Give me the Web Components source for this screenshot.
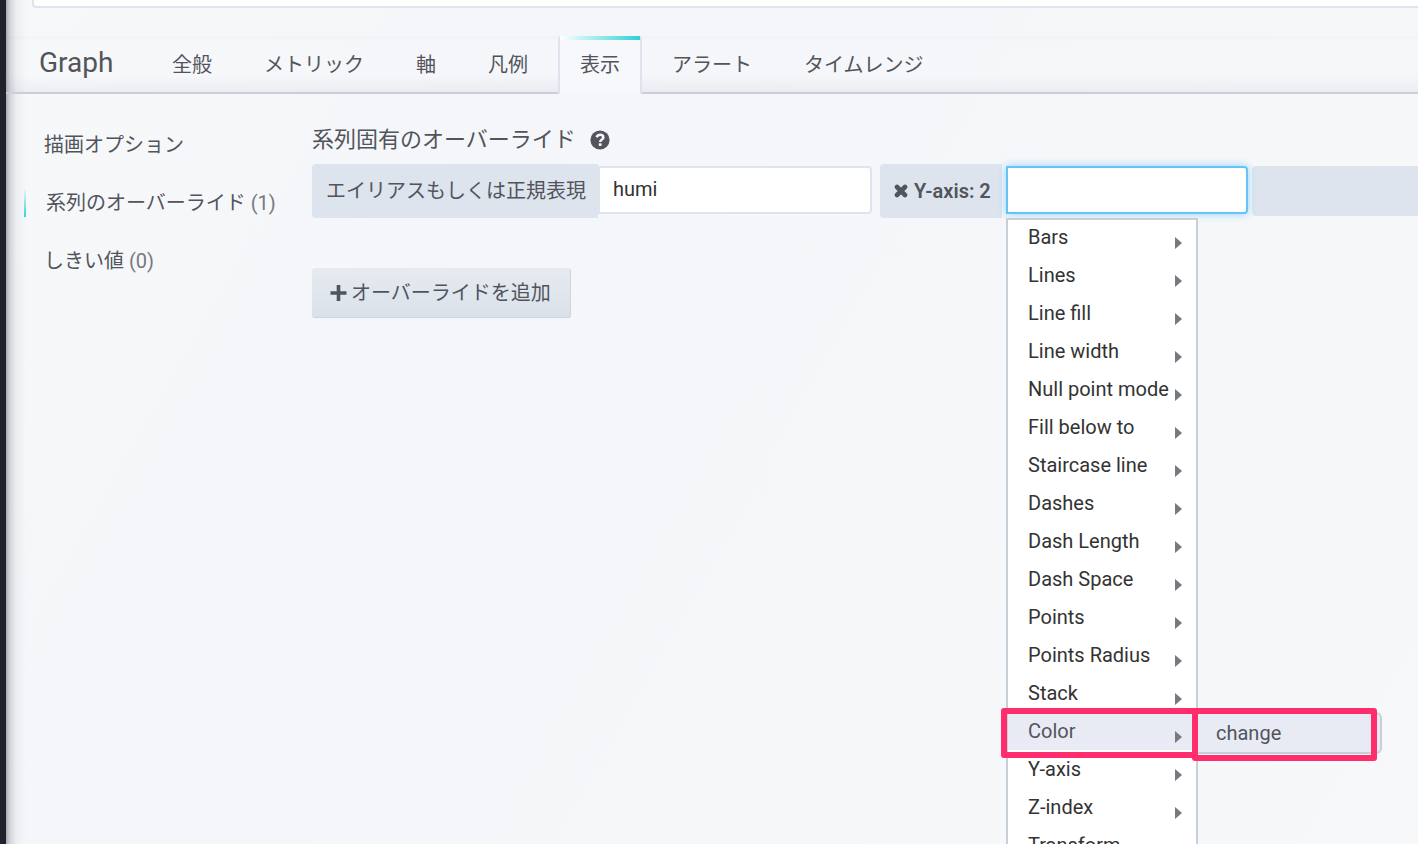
<!DOCTYPE html>
<html lang="ja">
<head>
<meta charset="utf-8">
<title>Graph</title>
<style>
  html, body { margin: 0; height: 100%; }
  body {
    font: 20px/28px Roboto, "Noto Sans CJK JP", sans-serif;
    color: #52545c;
    overflow: hidden;
    background: #f5f6f9;
  }
</style>
</head>
<body>
<graph-app></graph-app>

<script>
const define = (name, html, init) => {
  const tpl = document.createElement('template');
  tpl.innerHTML = html;
  customElements.define(name, class extends HTMLElement {
    connectedCallback() {
      if (this.shadowRoot) return;
      this.attachShadow({ mode: 'open' }).appendChild(tpl.content.cloneNode(true));
      if (init) init(this, this.shadowRoot);
    }
  });
};

/* One tab of the editor header */
define('graph-tab', `
  <style>
    :host { display: block; }
    a {
      display: block; box-sizing: border-box; height: 58px; padding: 15px 20px 0;
      border: 2px solid transparent; border-width: 0 2px;
      color: inherit; text-decoration: none; white-space: nowrap; position: relative;
    }
    :host([active]) a {
      background: #f7f8fb; border-color: #dde4ed; border-radius: 3px 3px 0 0;
    }
    :host([active]) a::before {
      content: ""; position: absolute; left: 0; right: 0; top: 0; height: 4px;
      background: linear-gradient(to right, #fff, #2ed1d6);
    }
  </style>
  <a href="#"><slot></slot></a>`);

/* Header: panel type and its tabs */
define('graph-tabs', `
  <style>
    :host {
      display: flex; height: 56px; padding-left: 33px;
      border-bottom: 2px solid #c7d0d9;
      background: linear-gradient(to bottom, #52648008, transparent 10%, transparent 70%, #52548010);
    }
    h1 { margin: 0; width: 111px; font-weight: 400; font-size: 28px; line-height: 54px; }
    nav { display: flex; gap: 8px; }
  </style>
  <h1>Graph</h1><nav><slot></slot></nav>`);

/* Entry of the side menu */
define('side-item', `
  <style>
    :host { display: block; }
    a { display: block; padding-left: 20px; color: inherit; text-decoration: none; white-space: nowrap; }
    :host([active]) a {
      border-left: 2px solid; border-image: linear-gradient(to bottom, #f5f6f9, #2ed1d6) 1;
    }
    ::slotted(span) { color: #767980; }
  </style>
  <a href="#"><slot></slot></a>`);

/* Menu entry with its arrow; may own a submenu */
define('menu-item', `
  <style>
    :host { display: block; position: relative; margin-bottom: 2px; }
    button {
      display: flex; justify-content: space-between; width: 100%; height: 36px;
      padding: 0 14px 0 20px; border: 0; background: none; font: inherit; line-height: 34px;
      color: #333; text-align: left; white-space: nowrap;
    }
    svg { flex: none; width: 7px; height: 12px; margin-top: 17px; }
    :host([active]) button { background: #e8ebf4; color: #52545c; }
    .mark {
      display: none; position: absolute; inset: -6px -2px -8px -7px;
      border: 6px solid #ff2d6b; border-radius: 3px; pointer-events: none; z-index: 2;
    }
    :host([active]) .mark { display: block; }
  </style>
  <button type="button"><slot></slot><svg viewBox="0 0 7 12"><path d="M0 0L7 6L0 12Z" fill="#767980"/></svg></button>
  <div class="mark"></div>
  <slot name="sub"></slot>`);

/* Submenu flying out to the right of its entry */
define('sub-menu', `
  <style>
    :host {
      display: block; position: absolute; left: 100%; top: -2px; width: 184px;
      border: 2px solid #c7d0d9; border-width: 2px 2px 2px 0; border-radius: 0 6px 6px 0; background: #e8ebf4;
    }
    button {
      display: block; width: 100%; height: 38px; padding: 0 20px; border: 0;
      background: none; font: inherit; line-height: 38px; color: #52545c; text-align: left;
    }
    .mark {
      position: absolute; inset: -6px 3px -9px -4px;
      border: 6px solid #ff2d6b; border-radius: 3px; pointer-events: none; z-index: 2;
    }
  </style>
  <button type="button"><slot></slot></button>
  <div class="mark"></div>`);

/* Text box with the override options listed below it */
define('option-picker', `
  <style>
    :host { display: block; position: relative; width: 242px; }
    input {
      display: block; box-sizing: border-box; width: 100%; height: 48px; padding: 0 14px;
      border: 2px solid #66c3f5; border-radius: 0 4px 4px 0; background: #fff; outline: none;
      font: inherit; color: #333; box-shadow: 0 0 8px #8fd3f7;
    }
    .menu {
      position: absolute; left: 0; top: 52px; width: 188px; padding-bottom: 2px;
      border: 2px solid #c7d0d9; background: #fff;
    }
  </style>
  <input type="text" aria-label="Option">
  <div class="menu"></div>`, (el, root) => {
  const menu = root.querySelector('.menu');
  for (const name of ['Bars', 'Lines', 'Line fill', 'Line width', 'Null point mode', 'Fill below to',
    'Staircase line', 'Dashes', 'Dash Length', 'Dash Space', 'Points', 'Points Radius', 'Stack',
    'Color', 'Y-axis', 'Z-index', 'Transform']) {
    const item = document.createElement('menu-item');
    item.textContent = name;
    if (name === 'Color') {
      item.setAttribute('active', '');
      const sub = document.createElement('sub-menu');
      sub.slot = 'sub';
      sub.textContent = 'change';
      item.append(sub);
    }
    menu.append(item);
  }
});

/* One override: alias, chosen options, picker */
define('override-row', `
  <style>
    :host { display: flex; height: 54px; }
    label, .chip { box-sizing: border-box; height: 54px; background: #dde4ed; white-space: nowrap; }
    label { width: 286px; padding: 13px 14px; border-radius: 4px 0 0 4px; }
    .alias {
      box-sizing: border-box; width: 274px; height: 48px; margin: 2px 8px 0 0; padding: 0 13px 2px;
      border: 2px solid #dde4ed; border-radius: 0 4px 4px 0; background: #fff; font: inherit; color: #333; outline: none;
    }
    .chip {
      display: flex; align-items: center; gap: 6px; width: 122px; padding: 0 0 0 14px; border: 0;
      border-radius: 4px 0 0 4px; font: inherit; font-weight: 600; color: inherit; margin-right: 4px;
    }
    .chip svg { width: 14px; height: 14px; }
    option-picker { margin: 2px 4px 0 0; z-index: 1; flex: none; }
    .rest { flex: 1; height: 50px; margin-top: 2px; background: #dde4ed; border-radius: 4px 0 0 4px; }
  </style>
  <label for="alias">エイリアスもしくは正規表現</label>
  <input class="alias" id="alias" type="text" value="humi">
  <button class="chip" type="button">
    <svg viewBox="0 0 14 14"><path d="M3 3L11 11M11 3L3 11" stroke="#52545c" stroke-width="4.6" stroke-linecap="round"/></svg>
    <span>Y-axis: 2</span>
  </button>
  <option-picker></option-picker>
  <div class="rest"></div>`);

define('add-button', `
  <style>
    :host { display: block; }
    button {
      display: flex; align-items: center; gap: 4px; height: 50px; padding: 0 20px 0 18px;
      border: 0; border-radius: 3px; font: inherit; color: inherit; white-space: nowrap;
      background: linear-gradient(to bottom, #e7ebf0, #d9e1ea);
      box-shadow: inset -1px -1px 0 #cfd6de;
    }
    svg { width: 17px; height: 16px; }
  </style>
  <button type="button">
    <svg viewBox="0 0 17 16"><path d="M8.5 1.8V14.2M2.3 8H14.7" stroke="#52545c" stroke-width="3.6" stroke-linecap="square"/></svg>
    <span><slot></slot></span>
  </button>`);

define('graph-app', `
  <style>
    :host { display: flex; height: 100vh; overflow: hidden; }
    .strip { flex: none; width: 6px; background: #1f212b; }
    main {
      flex: 1; min-width: 0; display: flex; flex-direction: column;
      background:
        linear-gradient(to right, #a9aab0, #d3d4d9 4px, #ecedf1 10px, transparent 20px),
        linear-gradient(-60deg, #f7f8fa, #f5f6f9 70%, #f7f8fa 98%);
    }
    .panel {
      flex: none; height: 6px; margin: 0 0 28px 26px; background: #fff;
      border: 2px solid #dde4ed; border-width: 0 0 2px 2px; border-radius: 0 0 0 4px;
    }
    graph-tabs { flex: none; }
    .body { display: flex; padding-left: 18px; }
    aside { flex: none; width: 288px; padding-top: 37px; display: flex; flex-direction: column; gap: 30px; }
    section { flex: 1; min-width: 0; padding-top: 30px; }
    h2 { display: flex; align-items: center; gap: 14px; margin: 0 0 8px; font-size: 22px; line-height: 32px; font-weight: 400; }
    h2 svg { width: 20px; height: 20px; }
    add-button { margin-top: 50px; }
  </style>
  <div class="strip"></div>
  <main>
    <div class="panel"></div>
    <graph-tabs>
      <graph-tab>全般</graph-tab><graph-tab>メトリック</graph-tab><graph-tab>軸</graph-tab><graph-tab>凡例</graph-tab><graph-tab active>表示</graph-tab><graph-tab>アラート</graph-tab><graph-tab>タイムレンジ</graph-tab>
    </graph-tabs>
    <div class="body">
      <aside>
        <side-item>描画オプション</side-item>
        <side-item active>系列のオーバーライド <span>(1)</span></side-item>
        <side-item>しきい値 <span>(0)</span></side-item>
      </aside>
      <section>
        <h2>系列固有のオーバーライド
          <svg viewBox="0 0 20 20"><circle cx="10" cy="10" r="9.6" fill="#52545c"/><path d="M6.6 7.2C7.4 5.4 8.6 4.8 10.1 4.8C12 4.8 13.3 6 13.3 7.4C13.3 9.6 10.2 9.5 10.2 12" fill="none" stroke="#f5f6f9" stroke-width="2.6"/><path d="M8.8 13.3h2.8v2.6H8.8z" fill="#f5f6f9"/></svg>
        </h2>
        <override-row></override-row>
        <add-button>オーバーライドを追加</add-button>
      </section>
    </div>
  </main>`);
</script>
</body>
</html>
